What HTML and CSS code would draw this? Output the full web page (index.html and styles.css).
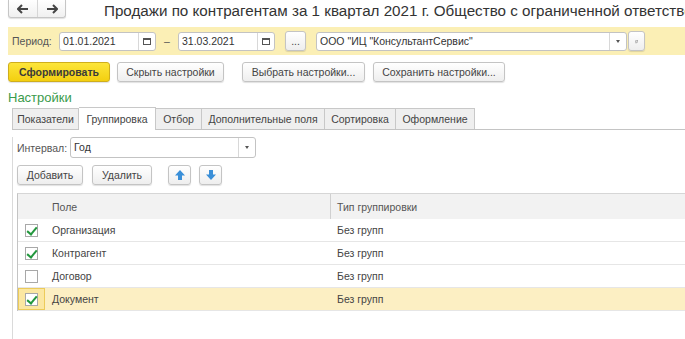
FILE: index.html
```html
<!DOCTYPE html>
<html>
<head>
	<meta charset="utf-8">
	<title>Продажи по контрагентам</title>
	<link rel="stylesheet" href="styles.css">
</head>
<body>
<div class="header">
	<div class="nav">
		<span class="nav-btn">
			<svg width="12" height="10" viewBox="0 0 12 10"><path d="M5 1 L1 5 L5 9 M1 5 H11" fill="none" stroke="#454545" stroke-width="2"/></svg>
		</span>
		<span class="nav-btn">
			<svg width="12" height="10" viewBox="0 0 12 10"><path d="M7 1 L11 5 L7 9 M11 5 H1" fill="none" stroke="#454545" stroke-width="2"/></svg>
		</span>
	</div>
	<h1 class="title">Продажи по контрагентам за 1 квартал 2021 г. Общество с ограниченной ответстве</h1>
</div>

<div class="params">
	<span class="label">Период:</span>
	<div class="field date">
		<span class="value">01.01.2021</span>
		<span class="field-btn"><i class="cal"></i></span>
	</div>
	<span class="dash">–</span>
	<div class="field date">
		<span class="value">31.03.2021</span>
		<span class="field-btn"><i class="cal"></i></span>
	</div>
	<span class="btn dots">...</span>
	<div class="field org">
		<span class="value">ООО "ИЦ "КонсультантСервис"</span>
		<span class="field-btn"><i class="tri"></i></span>
	</div>
	<span class="btn open-btn">
		<svg width="11" height="11" viewBox="0 0 11 11"><rect x="3.5" y="0.5" width="7" height="7" fill="none" stroke="#555"/><path d="M2 3.5 H0.5 V10.5 H7.5 V9" fill="none" stroke="#555"/></svg>
	</span>
</div>

<div class="actions">
	<span class="btn primary">Сформировать</span>
	<span class="btn hide-btn">Скрыть настройки</span>
	<span class="btn choose-btn">Выбрать настройки...</span>
	<span class="btn save-btn">Сохранить настройки...</span>
</div>

<div class="section-title">Настройки</div>

<div class="tabs">
	<span class="tab first" style="width:67px">Показатели</span>
	<span class="tab current" style="width:77px">Группировка</span>
	<span class="tab" style="width:46px">Отбор</span>
	<span class="tab" style="width:123px">Дополнительные поля</span>
	<span class="tab" style="width:71px">Сортировка</span>
	<span class="tab" style="width:79px">Оформление</span>
</div>

<div class="panel">
	<div class="interval">
		<span class="label">Интервал:</span>
		<div class="field interval-field">
			<span class="value">Год</span>
			<span class="field-btn"><i class="tri"></i></span>
		</div>
	</div>
	<div class="toolbar">
		<span class="btn add-btn">Добавить</span>
		<span class="btn del-btn">Удалить</span>
		<span class="btn icon-btn move-first">
			<svg width="12" height="12" viewBox="0 0 12 12"><path d="M6 1 L11 6.5 L8 6.5 L8 11 L4 11 L4 6.5 L1 6.5 Z" fill="#3a8fd8"/></svg>
		</span>
		<span class="btn icon-btn">
			<svg width="12" height="12" viewBox="0 0 12 12"><path d="M6 11 L11 5.5 L8 5.5 L8 1 L4 1 L4 5.5 L1 5.5 Z" fill="#3a8fd8"/></svg>
		</span>
	</div>
	<div class="grid">
		<div class="row head">
			<div class="cell check"></div>
			<div class="cell field-col">Поле</div>
			<div class="cell type-col">Тип группировки</div>
		</div>
		<div class="row">
			<div class="cell check"><i class="box on"></i></div>
			<div class="cell field-col">Организация</div>
			<div class="cell type-col">Без групп</div>
		</div>
		<div class="row">
			<div class="cell check"><i class="box on"></i></div>
			<div class="cell field-col">Контрагент</div>
			<div class="cell type-col">Без групп</div>
		</div>
		<div class="row">
			<div class="cell check"><i class="box"></i></div>
			<div class="cell field-col">Договор</div>
			<div class="cell type-col">Без групп</div>
		</div>
		<div class="row selected">
			<div class="cell check"><i class="box on"></i></div>
			<div class="cell field-col">Документ</div>
			<div class="cell type-col">Без групп</div>
		</div>
	</div>
</div>
</body>
</html>
```

FILE: styles.css
```css
* {
	margin: 0;
	padding: 0;
	box-sizing: border-box;
}
body {
	font-family: "Liberation Sans", Arial, sans-serif;
	font-size: 10.5px;
	color: #4d4d4d;
	background: #fff;
	overflow: hidden;
	width: 685px;
	height: 339px;
}
/* шапка */
.header {
	display: flex;
	align-items: flex-start;
	height: 27px;
	white-space: nowrap;
	overflow: hidden;
}
.nav {
	display: flex;
	flex-shrink: 0;
	margin-left: 8px;
	border: 1px solid #c6c6c6;
	border-top: none;
	border-radius: 0 0 3px 3px;
	box-shadow: 0 1px 1px rgba(0,0,0,.12);
	background: linear-gradient(#fff, #f0f0f0);
}
.nav-btn {
	display: flex;
	align-items: center;
	justify-content: center;
	width: 28px;
	height: 17px;
}
.nav-btn + .nav-btn {
	border-left: 1px solid #d6d6d6;
}
.title {
	margin-left: 38px;
	margin-top: 1px;
	font-size: 15.2px;
	font-weight: normal;
	color: #333;
	line-height: 20px;
}
/* панель параметров */
.params {
	display: flex;
	align-items: center;
	height: 28px;
	margin-left: 8px;
	padding-left: 4px;
	background: #fbefb5;
}
.label {
	color: #555;
	margin-right: 4px;
	white-space: nowrap;
}
.params .label {
	width: 43px;
}
.field {
	display: flex;
	flex-shrink: 0;
	height: 19px;
	background: #fff;
	border: 1px solid #c3c3c3;
	border-radius: 3px;
	color: #333;
}
.field .value {
	flex: 1;
	padding: 2px 3px 0;
	white-space: nowrap;
	overflow: hidden;
}
.field-btn {
	display: flex;
	align-items: center;
	justify-content: center;
	width: 17px;
	border-left: 1px solid #d8d8d8;
}
.date {
	width: 97px;
}
.dash {
	width: 22px;
	text-align: center;
	color: #555;
}
.dots {
	width: 21px;
	height: 19px;
	padding: 0;
	justify-content: center;
	margin-left: 10px;
	margin-right: 10px;
}
.org {
	width: 311px;
}
.open-btn {
	width: 17px;
	height: 19px;
	padding: 0;
	justify-content: center;
	margin-left: 1px;
}
.cal {
	display: block;
	width: 8px;
	height: 7px;
	border: 1px solid #555;
	border-top-width: 2px;
}
.tri {
	display: block;
	width: 0;
	height: 0;
	border-left: 2.5px solid transparent;
	border-right: 2.5px solid transparent;
	border-top: 3px solid #555;
}
/* кнопки */
.btn {
	display: inline-flex;
	align-items: center;
	justify-content: center;
	flex-shrink: 0;
	height: 20px;
	padding: 0 6px;
	border: 1px solid #c4c4c4;
	border-radius: 3px;
	background: linear-gradient(#ffffff, #eeeeee);
	box-shadow: 0 1px 1px rgba(0,0,0,.12);
	color: #444;
	white-space: nowrap;
}
.actions {
	display: flex;
	gap: 8px;
	margin: 7px 0 0 8px;
}
.btn.primary {
	width: 102px;
	background: linear-gradient(#fce53a, #f3cf10);
	border-color: #cfae1c;
	font-weight: bold;
	color: #3a3a3a;
}
.hide-btn {
	width: 107px;
	margin-left: -1px;
}
.choose-btn {
	width: 123px;
	margin-left: 10px;
}
.save-btn {
	width: 132px;
}
.section-title {
	margin: 8px 0 0 8px;
	font-size: 13px;
	color: #3a9b4b;
	line-height: 16px;
}
/* закладки */
.tabs {
	display: flex;
	align-items: flex-end;
	height: 23px;
	margin-left: 12px;
	margin-top: 1px;
	border-bottom: 1px solid #c4c4c4;
}
.tab {
	height: 21px;
	line-height: 20px;
	text-align: center;
	background: #efefef;
	border: 1px solid #c8c8c8;
	border-bottom: none;
	border-left: none;
	color: #444;
	white-space: nowrap;
}
.tab.first {
	border-left: 1px solid #c8c8c8;
}
.tab.current {
	height: 23px;
	line-height: 23px;
	margin-bottom: -1px;
	background: #fff;
}
/* панель закладки */
.panel {
	margin-left: 12px;
	border-left: 1px solid #dadada;
	height: 210px;
	padding-left: 4px;
}
.interval {
	display: flex;
	align-items: center;
	margin-top: 7px;
}
.interval .label {
	margin-right: 3px;
}
.interval-field {
	width: 186px;
	height: 21px;
}
.interval-field .value {
	padding-top: 3px;
}
.toolbar {
	display: flex;
	gap: 8px;
	margin-top: 7px;
}
.add-btn {
	width: 66px;
}
.del-btn {
	width: 60px;
	margin-left: 1px;
}
.icon-btn {
	width: 23px;
	padding: 0;
}
.move-first {
	margin-left: 8px;
}
/* таблица */
.grid {
	margin-top: 8px;
	border-left: 1px solid #c4c4c4;
	border-top: 1px solid #d6d6d6;
	width: 700px;
}
.row {
	display: flex;
	height: 23px;
	border-bottom: 1px solid #e6e6e6;
	color: #444;
}
.row.head {
	height: 25px;
	background: #f2f2f2;
	color: #555;
	border-bottom: none;
}
.cell {
	display: flex;
	align-items: center;
}
.check {
	width: 27px;
	justify-content: center;
}
.field-col {
	width: 286px;
	padding-left: 7px;
}
.head .field-col {
	border-right: 1px solid #d0d0d0;
}
.type-col {
	padding-left: 6px;
}
.row.selected {
	background: #fcefc3;
}
.row.selected .check {
	border: 1px solid #eccb5a;
	background: #fbe7a2;
}
.box {
	display: block;
	width: 13px;
	height: 13px;
	border: 1px solid #a8a8a8;
	background: #fff;
	position: relative;
}
.box.on::after {
	content: "";
	position: absolute;
	left: 3px;
	top: 0px;
	width: 4px;
	height: 8px;
	border-right: 2px solid #22973d;
	border-bottom: 2px solid #22973d;
	transform: rotate(40deg);
}
```
